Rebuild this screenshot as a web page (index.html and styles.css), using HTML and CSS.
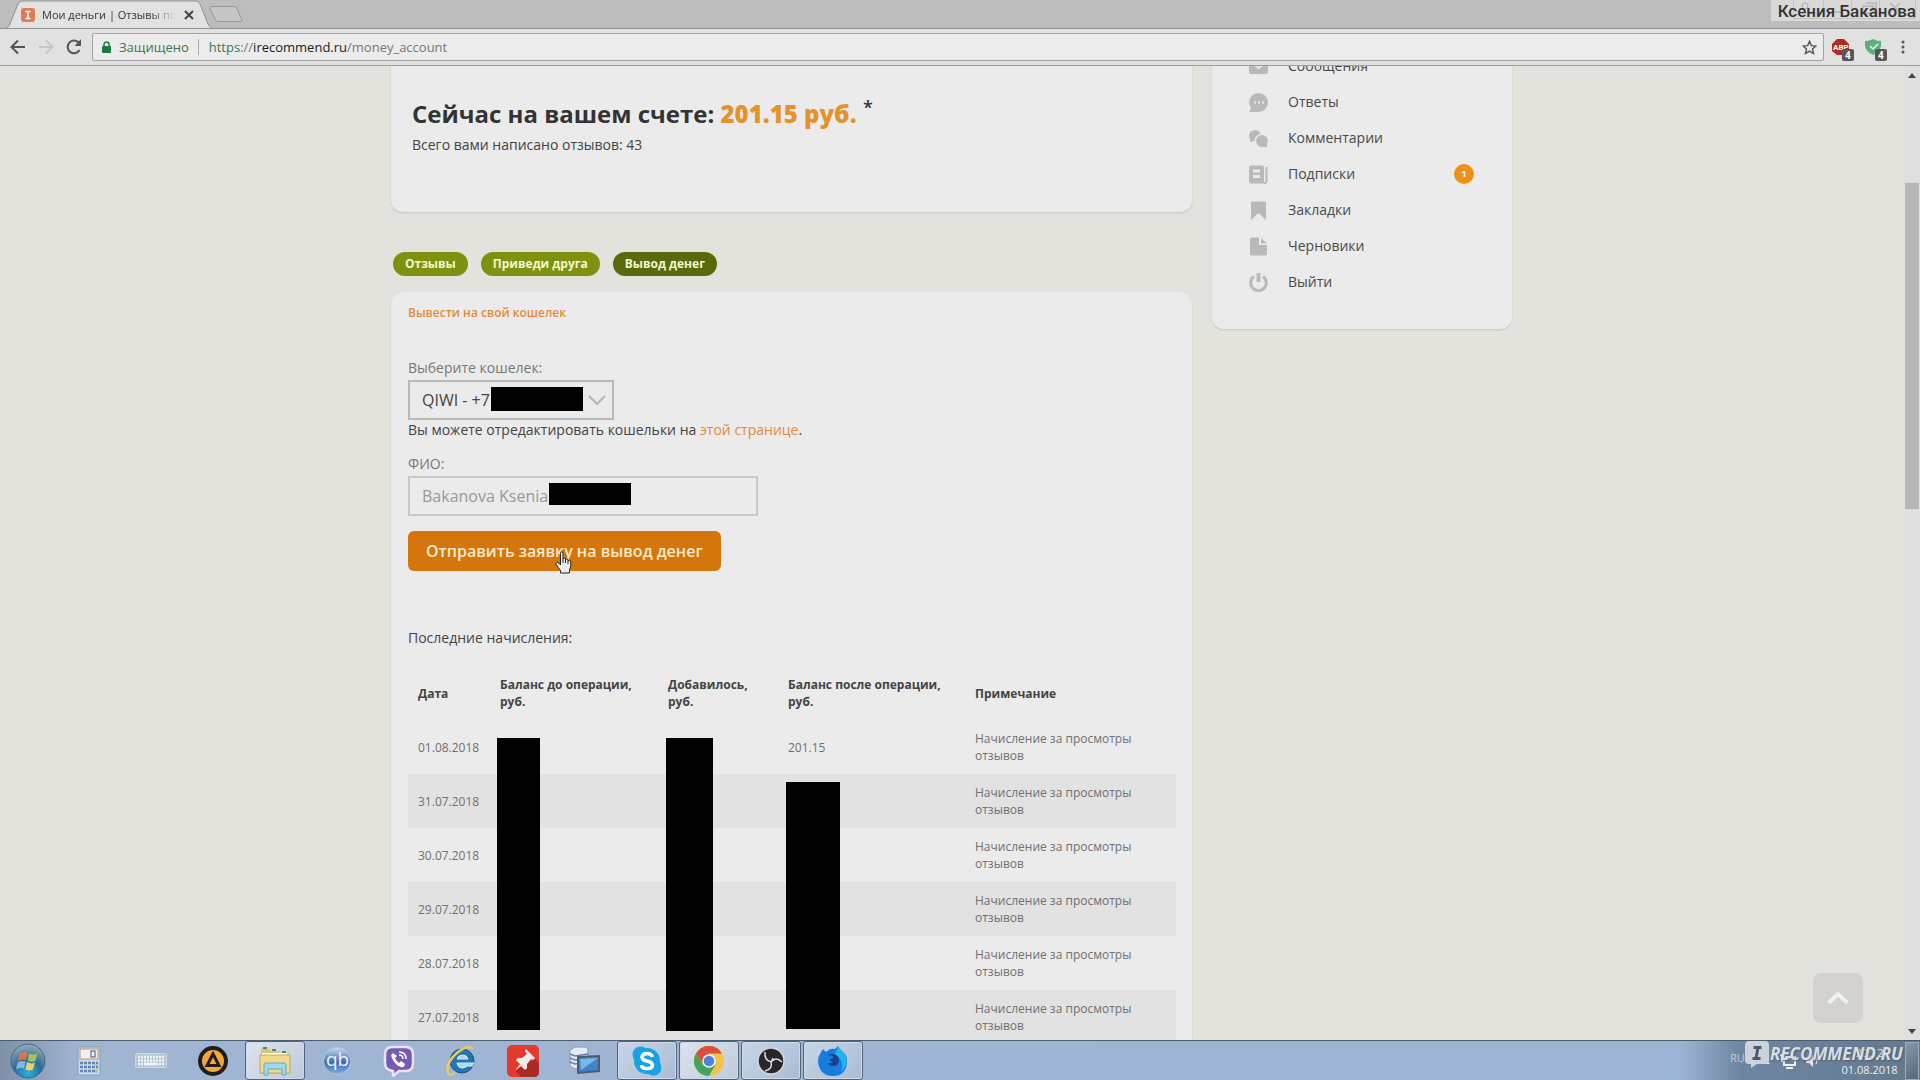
FILE: index.html
```html
<!DOCTYPE html>
<html lang="ru">
<head>
<meta charset="utf-8">
<title>Мои деньги | Отзывы покупателей</title>
<link rel="stylesheet" href="styles.css">
</head>
<body>
<header class="browser">
  <div class="tabstrip">
    <div class="tab">
      <svg class="tab-shape" width="206" height="28" viewBox="0 0 206 28"><path d="M0 28C3 27 3 26 4 24L12 4Q13 1 16 1H190Q193 1 194 4L202 24Q203 27 206 28Z" fill="#e2e2e2"/><path d="M0 28C3 27 3 26 4 24L12 4Q13 1 16 1H190Q193 1 194 4L202 24Q203 27 206 28" fill="none" stroke="#929292"/></svg>
      <svg class="favicon" width="14" height="14" viewBox="0 0 14 14"><rect width="14" height="14" rx="3" fill="#e27a55"/><path d="M4.500 3.500h5M7 3.500v7M4.500 10.500h5" stroke="#fff" stroke-width="1.600"/></svg>
      <span class="tab-title">Мои деньги | Отзывы покупателей</span>
      <button class="icon-btn" aria-label="Закрыть вкладку"><svg width="10" height="10" viewBox="0 0 10 10"><path d="M1 1l8 8M9 1l-8 8" stroke="#444" stroke-width="2"/></svg></button>
    </div>
    <button class="icon-btn new-tab" aria-label="Новая вкладка"><svg width="34" height="16" viewBox="0 0 34 16"><path d="M3 .5H25Q27 .500 28 3L33 14Q33 15.500 31 15.500H9Q7 15.500 6 13L1 3Q.5 .5 3 .5Z" fill="#c6c6c6" stroke="#989898"/></svg></button>
    <div class="window-box">
      <svg class="window-controls" width="149" height="21" viewBox="0 0 149 21"><rect width="149" height="21" fill="#d9d9d9"/><path d="M22.500 0v18M52.500 0v18M80.500 0v18M108.500 0v18M144.500 0v18M22 18.500h122" stroke="#c2c2c2"/><circle cx="34" cy="6" r="3" fill="none" stroke="#aaa"/><path d="M60 12h12M92 6h10v7h-10zM95 3h10v7M119 3l10 9M129 3l-10 9" fill="none" stroke="#b4b4b4" stroke-width="1.500"/></svg>
      <span class="owner">Ксения Баканова</span>
    </div>
  </div>
  <div class="toolbar">
    <button class="icon-btn" aria-label="Назад"><svg width="16" height="16" viewBox="0 0 16 16"><path d="M15 8H2M8 1.500L1.500 8L8 14.500" fill="none" stroke="#555" stroke-width="2"/></svg></button>
    <button class="icon-btn" aria-label="Вперёд"><svg width="16" height="16" viewBox="0 0 16 16"><path d="M1 8h13M8 1.500L14.500 8L8 14.500" fill="none" stroke="#c6c6c6" stroke-width="2"/></svg></button>
    <button class="icon-btn" aria-label="Обновить"><svg width="16" height="16" viewBox="0 0 16 16"><path d="M13.500 11A6.300 6.300 0 1 1 12.500 3.500" fill="none" stroke="#555" stroke-width="2"/><path d="M15 0v7H8.500z" fill="#555"/></svg></button>
    <div class="address">
      <svg width="9" height="12" viewBox="0 0 9 12"><rect y="5" width="9" height="7" rx="1" fill="#1f7a3d"/><path d="M2 5.500V3.500a2.500 2.500 0 0 1 5 0v2" fill="none" stroke="#1f7a3d" stroke-width="1.500"/></svg>
      <span class="secure">Защищено</span>
      <span class="url"><span class="scheme">https</span>://<span class="host">irecommend.ru</span>/money_account</span>
      <svg class="star" width="15" height="15" viewBox="0 0 16 16"><path d="M8 1.500l2 4.500 4.900.4-3.700 3.200 1.100 4.800L8 11.900l-4.300 2.500 1.100-4.800L1.100 6.400 6 6z" fill="none" stroke="#555" stroke-width="1.500"/></svg>
    </div>
    <button class="icon-btn ext" aria-label="ABP"><svg width="24" height="24" viewBox="0 0 24 24"><path d="M5 1h7l5 5v7l-5 4H5l-5-4V6z" fill="#b52a20"/><text x="1" y="12" class="abp">ABP</text><rect x="10" y="11" width="12" height="12" rx="2" fill="#565656"/><text x="13" y="21" class="count">4</text></svg></button>
    <button class="icon-btn ext" aria-label="Защита"><svg width="24" height="24" viewBox="0 0 24 24"><path d="M0 3Q5 3 8 1Q11 3 16 3V8Q15 14 8 17Q1 14 0 8Z" fill="#5faf7c"/><path d="M5 8l3 3 5-5" fill="none" stroke="#e5f2e9" stroke-width="1.500"/><rect x="10" y="11" width="12" height="12" rx="2" fill="#565656"/><text x="13" y="21" class="count">4</text></svg></button>
    <button class="icon-btn menu" aria-label="Меню"><svg width="4" height="14" viewBox="0 0 4 14" fill="#555"><circle cx="2" cy="2" r="1.500"/><circle cx="2" cy="7" r="1.500"/><circle cx="2" cy="12" r="1.500"/></svg></button>
  </div>
</header>

<div class="viewport">
  <div class="page">
    <div class="layout">
      <main class="main">
        <section class="card balance">
          <h1>Сейчас на вашем счете: <span class="sum">201.15 руб.</span> <sup>*</sup></h1>
          <p>Всего вами написано отзывов: 43</p>
        </section>
        <nav class="pills">
          <a href="#reviews">Отзывы</a>
          <a href="#friend">Приведи друга</a>
          <a href="#payout" class="active">Вывод денег</a>
        </nav>
        <section class="card payout">
          <a class="payout-title" href="#wallet">Вывести на свой кошелек</a>
          <form class="form">
            <label for="wallet">Выберите кошелек:</label>
            <div class="select-box">
              <select id="wallet"><option>QIWI - +7</option></select>
              <span class="mask mask-phone"></span>
              <svg class="chevron" width="18" height="11" viewBox="0 0 18 11"><path d="M1 1l8 8 8-8" fill="none" stroke="#b5b5b5" stroke-width="2"/></svg>
            </div>
            <p class="hint">Вы можете отредактировать кошельки на <a href="#wallets">этой странице</a>.</p>
            <label for="fio">ФИО:</label>
            <div class="input-box">
              <input id="fio" type="text" value="Bakanova Ksenia">
              <span class="mask mask-name"></span>
            </div>
            <div class="submit-box">
              <button class="submit" type="button">Отправить заявку на вывод денег</button>
              <svg class="pointer" width="17" height="23" viewBox="0 0 17 23"><path d="M5.500 14V2.500Q5.500 .8 6.700 .8T8 2.500V8Q8 6.800 9.200 6.800T10.500 8V9Q10.500 8 11.700 8T13 9.200V10Q13 9.300 14.300 9.300T15.800 11V15Q15.500 17 14.500 18.500V22H5.500V19.500Q3 16.500 1.200 13.500Q.5 12 1.700 11.500T4 12.300Z" fill="#ececec" stroke="#222"/><path d="M8 8v4M10.500 9v3M13 10v3" stroke="#222"/></svg>
            </div>
          </form>
          <p class="table-title">Последние начисления:</p>
          <div class="table-box">
            <table>
              <colgroup><col class="c-date"><col class="c-before"><col class="c-added"><col class="c-after"><col></colgroup>
              <thead><tr><th>Дата</th><th>Баланс до операции, руб.</th><th>Добавилось, руб.</th><th>Баланс после операции, руб.</th><th>Примечание</th></tr></thead>
              <tbody>
                <tr><td>01.08.2018</td><td></td><td></td><td>201.15</td><td>Начисление за просмотры отзывов</td></tr>
                <tr><td>31.07.2018</td><td></td><td></td><td></td><td>Начисление за просмотры отзывов</td></tr>
                <tr><td>30.07.2018</td><td></td><td></td><td></td><td>Начисление за просмотры отзывов</td></tr>
                <tr><td>29.07.2018</td><td></td><td></td><td></td><td>Начисление за просмотры отзывов</td></tr>
                <tr><td>28.07.2018</td><td></td><td></td><td></td><td>Начисление за просмотры отзывов</td></tr>
                <tr><td>27.07.2018</td><td></td><td></td><td></td><td>Начисление за просмотры отзывов</td></tr>
              </tbody>
            </table>
            <span class="mask mask-before"></span>
            <span class="mask mask-added"></span>
            <span class="mask mask-after"></span>
          </div>
        </section>
      </main>
      <aside class="card side">
        <a href="#messages"><svg width="19" height="19" viewBox="0 0 19 19"><rect y="2" width="19" height="15" rx="2" fill="#b9b9b9"/><path d="M3 6l6.500 5L16 6" fill="none" stroke="#ebebeb" stroke-width="2"/></svg>Сообщения</a>
        <a href="#answers"><svg width="19" height="19" viewBox="0 0 19 19"><path d="M9.500 0a9.500 9.500 0 1 1 0 19c-3 0-7 0-9 0l1.500-4A9.500 9.500 0 0 1 9.500 0z" fill="#b9b9b9"/><path d="M5 9.500h2M9 9.500h2M13 9.500h2" stroke="#ebebeb" stroke-width="2"/></svg>Ответы</a>
        <a href="#comments"><svg width="19" height="19" viewBox="0 0 19 19" fill="#b9b9b9"><path d="M6 1A5.500 5.500 0 0 1 11.500 4.500Q5.500 6.500 5.500 12L1 13V10Q0 8.500 0 6.500A6 5.500 0 0 1 6 1z"/><path d="M13 6a6 6 0 0 1 5 9v3h-5A6 6 0 0 1 13 6z"/></svg>Комментарии</a>
        <a href="#subscriptions"><svg width="19" height="19" viewBox="0 0 19 19"><path d="M2 .5H13Q15 .5 15 2.500V18.500H2Q0 18.500 0 16.500V2.500Q0 .5 2 .5z" fill="#b9b9b9"/><path d="M4 6h7M4 11.500h7" stroke="#ebebeb" stroke-width="3"/><path d="M17.500 2v15q0 1-3 1" fill="none" stroke="#b9b9b9" stroke-width="2"/></svg>Подписки<span class="badge">1</span></a>
        <a href="#bookmarks"><svg width="19" height="19" viewBox="0 0 19 19"><path d="M2 .5H17V19L9.500 12L2 19z" fill="#b9b9b9"/></svg>Закладки</a>
        <a href="#drafts"><svg width="19" height="19" viewBox="0 0 19 19" fill="#b9b9b9"><path d="M3 .5H10V8H18V17q0 1.500-1.500 1.500H2.500Q1 18.500 1 17V2Q1 .5 3 .5z"/><path d="M12 1l6 5.500h-6z"/></svg>Черновики</a>
        <a href="#logout"><svg width="19" height="19" viewBox="0 0 19 19" fill="none" stroke="#b9b9b9" stroke-width="3"><path d="M5 3.500a7.800 7.800 0 1 0 9 0"/><path d="M9.500 0v9" stroke-width="4"/></svg>Выйти</a>
      </aside>
    </div>
    <button class="to-top" aria-label="Наверх"><svg width="22" height="14" viewBox="0 0 22 14"><path d="M1.500 12L11 3l9.500 9" fill="none" stroke="#f1f1f0" stroke-width="4"/></svg></button>
  </div>
  <div class="scrollbar">
    <svg width="8" height="5" viewBox="0 0 8 5"><path d="M0 5l4-5 4 5z" fill="#444"/></svg>
    <div class="track"><div class="thumb"></div></div>
    <svg width="8" height="5" viewBox="0 0 8 5"><path d="M0 0h8L4 5z" fill="#444"/></svg>
  </div>
</div>

<footer class="taskbar">
  <button class="start" aria-label="Пуск"><svg width="36" height="36" viewBox="0 0 36 36"><defs><radialGradient id="orb" cx=".5" cy=".85" r=".8"><stop offset="0" stop-color="#25b5e0"/><stop offset=".5" stop-color="#2b6c9c"/><stop offset="1" stop-color="#8fa5b8"/></radialGradient></defs><circle cx="18" cy="18" r="17" fill="url(#orb)" stroke="#466580"/><path d="M9.500 11q4-3 8-1l-1.500 7q-4-1.500-8 1z" fill="#e0734a"/><path d="M19 10.500q4 2 8.500 0l-2 7.500q-4 2-8-.5z" fill="#a3c35e"/><path d="M7.500 19.500q4-2.500 8-1l-1.500 7q-4-2-8 1z" fill="#7fb9e6"/><path d="M17 19q4 2.500 8 .5l-2 7q-4 2-7.500 0z" fill="#f2cf5b"/></svg></button>
  <div class="apps">
    <button aria-label="Калькулятор"><svg width="24" height="30" viewBox="0 0 24 30"><rect x="1" y="1" width="22" height="28" rx="1" fill="#c8ddf0" stroke="#7e9fc0"/><rect x="3" y="3" width="18" height="10" fill="#eef2f5" stroke="#c58f56"/><rect x="14" y="5" width="4" height="6" fill="none" stroke="#456"/><path d="M3 17h18M3 21h18M3 25h18" stroke="#6483ad" stroke-width="2.500" stroke-dasharray="3 1"/><path d="M18 19h3M18 25h3" stroke="#c4c17a" stroke-width="2"/></svg></button>
    <button aria-label="Экранная клавиатура"><svg width="32" height="16" viewBox="0 0 32 16"><rect x=".5" y=".5" width="31" height="14" rx="1" fill="#b5c4d6" stroke="#cbd8e6"/><path d="M3 4h27M3 7.500h27M3 11h27" stroke="#f2f5f8" stroke-width="2.500" stroke-dasharray="2 1"/><path d="M10 11h11" stroke="#f2f5f8" stroke-width="2.500"/></svg></button>
    <button aria-label="AIMP"><svg width="30" height="30" viewBox="0 0 30 30"><circle cx="15" cy="15" r="13" fill="#f1a83b" stroke="#221c1a" stroke-width="4"/><path d="M15 8L9 19.500h12z" fill="none" stroke="#221c1a" stroke-width="3"/></svg></button>
    <button class="open current" aria-label="Проводник"><svg width="32" height="30" viewBox="0 0 32 30"><path d="M2 3h8l2 2h8l2 2h8v21H2z" fill="#dcc372"/><path d="M3 7h25v3H3z" fill="#fff"/><path d="M1 9h30v18H1z" fill="#efd98d" stroke="#c2a860"/><path d="M4 2h4M13 4h4M23 6h4" stroke="#4f8b62" stroke-width="2"/><path d="M5 29V19q0-2 2-2h18q2 0 2 2v10h-4v-6H9v6z" fill="#9fd7ee" stroke="#5fa9ca"/></svg></button>
    <button aria-label="qBittorrent"><svg width="28" height="28" viewBox="0 0 28 28"><defs><linearGradient id="qb" x2="0" y2="1"><stop offset="0" stop-color="#c9d9ec"/><stop offset=".55" stop-color="#3f6bac"/><stop offset="1" stop-color="#80b0df"/></linearGradient></defs><circle cx="14" cy="14" r="13.500" fill="url(#qb)" stroke="#b6c8dd"/><text x="3" y="19" class="qb">qb</text></svg></button>
    <button aria-label="Viber"><svg width="32" height="32" viewBox="0 0 32 32"><path d="M9 2h14q7 0 7 8v8q0 8-7 8h-7l-6 5v-5Q2 25 2 18v-8Q2 2 9 2z" fill="#765bb5" stroke="#e9e4f3" stroke-width="2.500"/><path d="M10 8q-3 2-1 5 3 7 9 9 3 1 4-3l-4-3-2 2q-3-2-4-5l2-2z" fill="#fff"/><path d="M16 7q7 0 7 7M16 10q4 0 4 4" fill="none" stroke="#fff" stroke-width="1.500"/></svg></button>
    <button aria-label="Internet Explorer"><svg width="32" height="32" viewBox="0 0 32 32"><circle cx="17" cy="16" r="12" fill="#2475b4" stroke="#174e86"/><path d="M29 18H12q1 5 5.500 5 3 0 4.500-2h6M12 14q1-4 5.500-4t5.500 4z" fill="#a9d8f0" stroke="#d5ebf6"/><path d="M28 4Q24-1 13 7 0 18 3 28q1 3 7 0" fill="none" stroke="#e6cb67" stroke-width="2.500"/></svg></button>
    <button aria-label="Канцелярская кнопка"><svg width="32" height="32" viewBox="0 0 32 32"><rect width="32" height="32" rx="5" fill="#e23b2e"/><path d="M28 14L32 18V27q0 5-5 5H14L8 25z" fill="#a82c25"/><path d="M19 4l9 9-2 2-2-1-4 5v4l-2 2-4-4-6 5 5-7-4-4 2-2h4l5-4-2-3z" fill="#f3ede9"/></svg></button>
    <button aria-label="Удалённый рабочий стол"><svg width="32" height="30" viewBox="0 0 32 30"><path d="M1 4l5-3h11l2 2v17L6 23l-5-3z" fill="#e3eaf2" stroke="#8498b5"/><path d="M1 8l5 2 13-2M1 12l5 2 13-2M1 16l5 2 13-2" fill="none" stroke="#6480ae" stroke-width="1.500"/><path d="M9 11l21-1v15L9 27z" fill="#3e86cb" stroke="#505c6c" stroke-width="2"/><path d="M11 13l18-1-17 12z" fill="#79b8ea"/></svg></button>
    <button class="open" aria-label="Skype"><svg width="30" height="30" viewBox="0 0 30 30"><circle cx="15" cy="15" r="13" fill="#17a3e0"/><circle cx="8.500" cy="8.500" r="8" fill="#17a3e0"/><circle cx="21.500" cy="21.500" r="8" fill="#17a3e0"/><path d="M20.500 11q-1-3.500-5.500-3.500t-5 3.500q0 3 5 4t5.500 4q0 3.500-5.500 3.500T9.500 19" fill="none" stroke="#fff" stroke-width="3.500"/></svg></button>
    <button class="open current" aria-label="Chrome"><svg width="30" height="30" viewBox="0 0 30 30"><circle cx="15" cy="15" r="15" fill="#f3c443"/><path d="M2 7.500A15 15 0 0 1 28 7.500H15l-6.500 11z" fill="#dc4d3c"/><path d="M2 7.500A15 15 0 0 0 15 30l6.500-11.500H8.500z" fill="#46a35e"/><circle cx="15" cy="15" r="6.800" fill="#f5f5f5"/><circle cx="15" cy="15" r="5.300" fill="#4786d8"/></svg></button>
    <button class="open" aria-label="OBS"><svg width="28" height="28" viewBox="0 0 28 28"><circle cx="14" cy="14" r="13" fill="#282629" stroke="#d2d5da" stroke-width="1.500"/><path d="M14 15Q7 13 8 5M14 15q5-6 11 0M14 15q2 7-6 9M14 15l2-4" fill="none" stroke="#ddd" stroke-width="1.500"/></svg></button>
    <button class="open" aria-label="Firefox"><svg width="30" height="30" viewBox="0 0 30 30"><path d="M2 8l3-5 3 3q4-4 9-3l3-3 2 4q8 4 7 12-1 14-14 14T0 16q0-5 2-8z" fill="#167dde"/><path d="M20 1q11 8 8 18-2 5-5 7 4-11-6-18z" fill="#22b4ee"/><path d="M10 9q3-2 8 0 3 2 3 6-1 5-6 5-4 0-5-3 3 1 5-1-3 0-3-3l4-1q-1-3-6-3z" fill="#1b3f86"/></svg></button>
  </div>
  <div class="tray">
    <span class="lang">RU</span>
    <svg class="tray-icons" width="60" height="18" viewBox="0 0 60 18"><path d="M0 12l5-5 5 5z" fill="#eee"/><path d="M24 5h11v8H24zM26 16h7M22 2v8M20 3h5" fill="none" stroke="#eee" stroke-width="2"/><path d="M46 6h3l4-4v13l-4-4h-3z" fill="#e5e5e5"/><path d="M56 5q2 4 0 7" fill="none" stroke="#eee"/></svg>
    <span class="clock"><span>20:12</span><span>01.08.2018</span></span>
    <button class="show-desktop" aria-label="Свернуть все окна"></button>
    <div class="watermark">
      <svg width="26" height="30" viewBox="0 0 26 30"><path d="M5 2h16q4 0 4 4v15q0 4-4 4h-8l-6 4v-4H5q-4 0-4-4V6q0-4 4-4z" fill="#ccd3db"/><path d="M9.500 8.500h8M8.500 19.500h8M14 8.500l-2 11" stroke="#4e5c6c" stroke-width="3"/></svg>
      <span>RECOMMEND.RU</span>
    </div>
  </div>
</footer>
</body>
</html>
```

FILE: styles.css
```css
* { box-sizing: border-box; }

body {
  margin: 0;
  height: 100vh;
  display: flex;
  flex-direction: column;
  overflow: hidden;
  background: #e3e2dd;
  color: #444;
  font: 14px/20px "Open Sans", "Noto Sans", sans-serif;
}

h1, p { margin: 0; }
svg { display: block; flex: none; }
a { color: #e08c3c; text-decoration: none; }
button { font-family: inherit; }

/* Browser frame */
.tabstrip {
  display: flex;
  height: 28px;
  padding-left: 6px;
  background: #bdbdbd;
}
.tab {
  position: relative;
  display: flex;
  align-items: center;
  width: 206px;
  padding: 2px 18px 0 15px;
}
.tab-shape { position: absolute; left: 0; top: 0; }
.favicon { position: relative; }
.tab-title {
  position: relative;
  flex: 1;
  margin: 0 8px 0 7px;
  overflow: hidden;
  white-space: nowrap;
  font-size: 11px;
  color: #333;
  -webkit-mask-image: linear-gradient(to right, #000 80%, transparent);
  mask-image: linear-gradient(to right, #000 80%, transparent);
}
.icon-btn {
  position: relative;
  display: flex;
  padding: 0;
  border: 0;
  background: none;
}
.new-tab { align-self: center; margin-left: -3px; }
.window-box { position: relative; height: 21px; margin-left: auto; }
.owner {
  position: absolute;
  top: 0;
  right: 4px;
  font: 500 17px/22px Roboto, sans-serif;
  white-space: nowrap;
  color: #333;
}
.toolbar {
  display: flex;
  align-items: center;
  gap: 12px;
  height: 38px;
  padding: 0 15px 0 10px;
  background: #e1e1e1;
  border-top: 1px solid #929292;
  border-bottom: 1px solid #9d9d9d;
}
.address {
  flex: 1;
  display: flex;
  align-items: center;
  height: 28px;
  margin: 0 -4px 0 -2px;
  padding: 0 6px 0 9px;
  border: 1px solid #a2a2a2;
  border-radius: 2px;
  background: #ececec;
  font-size: 13px;
}
.secure {
  margin: 0 10px 0 8px;
  padding-right: 9px;
  border-right: 1px solid #aaa;
  line-height: 16px;
  color: #357a4b;
}
.url { flex: 1; color: #777; }
.scheme { color: #357a4b; }
.host { color: #222; }
.ext { margin-right: -3px; padding-top: 6px; }
.menu { margin-left: 3px; }
.abp { font: 700 8px Roboto, sans-serif; fill: #fff; }
.count { font: 700 10px Roboto, sans-serif; fill: #fff; }

/* Page */
.viewport { flex: 1; display: flex; min-height: 0; }
.page { position: relative; flex: 1; padding: 0 20px 0 19px; overflow: hidden; }
.layout {
  display: grid;
  grid-template-columns: 1fr 300px;
  gap: 20px;
  align-items: start;
  max-width: 1121px;
  margin: -24px auto 0;
}
.card {
  background: #ebebeb;
  border-radius: 12px;
  box-shadow: 0 1px 2px #c6c5c1;
}
.balance { padding: 56px 21px 57px; }
.balance h1 {
  margin-bottom: 5px;
  font-size: 24px;
  line-height: 32px;
  font-weight: 700;
  color: #333;
}
.balance sup { font-size: 18px; line-height: 0; font-weight: 600; }
.balance .sum { color: #e4932b; font-weight: 800; }

.pills { display: flex; gap: 13px; padding: 40px 2px 16px; }
.pills a {
  padding: 0 12px;
  border-radius: 12px;
  background: #7f920f;
  color: #f3f6cf;
  font-size: 12px;
  line-height: 24px;
  font-weight: 700;
}
.pills .active { background: #586a0c; }

.payout { padding: 12px 16px 20px 17px; }
.payout-title { display: block; font-size: 12px; line-height: 18px; font-weight: 600; }
.form { display: flex; flex-direction: column; align-items: flex-start; padding-top: 36px; }
.form label { color: #777; }
.select-box, .input-box, .submit-box { position: relative; }
.select-box, .input-box { margin-top: 2px; }
.form select, .form input {
  display: block;
  height: 40px;
  padding: 0 12px;
  appearance: none;
  border: 2px solid #b9b9b9;
  border-radius: 0;
  background: #ebebeb;
  color: #444;
  font: 16px/20px "Open Sans", sans-serif;
}
.form select { width: 206px; }
.form input { width: 350px; border-color: #c9c9c9; color: #999; }
.chevron { position: absolute; right: 8px; top: 15px; }
.hint { margin-bottom: 14px; }
.submit {
  display: block;
  height: 40px;
  margin-top: 15px;
  padding: 0 18px;
  border: 0;
  border-radius: 6px;
  background: #d4760c;
  color: #fbe9cc;
  font-size: 16px;
  font-weight: 600;
}
.pointer { position: absolute; left: 147px; top: 35px; }
.mask { position: absolute; background: #000; }
.mask-phone { left: 83px; top: 7px; width: 92px; height: 24px; }
.mask-name { left: 141px; top: 7px; width: 82px; height: 22px; }
.mask-before { left: 89px; top: 72px; width: 43px; height: 292px; }
.mask-added { left: 258px; top: 72px; width: 47px; height: 293px; }
.mask-after { left: 378px; top: 116px; width: 54px; height: 247px; }

.table-title { padding: 57px 0 18px; }
.table-box { position: relative; }
table { width: 100%; table-layout: fixed; border-collapse: collapse; font-size: 12px; line-height: 17px; }
.c-date { width: 82px; }
.c-before { width: 168px; }
.c-added { width: 120px; }
.c-after { width: 187px; }
th, td { height: 54px; padding: 0 8px 0 10px; text-align: left; }
th { color: #444; font-weight: 700; }
td { color: #707070; }
td:last-child { padding-right: 40px; }
tbody tr:nth-child(even) { background: #e2e2e2; }

.side { padding: 6px 38px 29px 37px; }
.side a { display: flex; align-items: center; gap: 20px; height: 36px; color: #4a4a4a; }
.badge {
  width: 20px;
  margin-left: auto;
  border-radius: 50%;
  background: #ed9116;
  color: #fff;
  font-size: 9px;
  font-weight: 700;
  text-align: center;
}
.to-top {
  position: absolute;
  right: 41px;
  bottom: 17px;
  display: grid;
  place-items: center;
  width: 50px;
  height: 50px;
  padding: 0;
  border: 0;
  border-radius: 8px;
  background: #d3d2cf;
}

.scrollbar {
  display: flex;
  flex-direction: column;
  align-items: center;
  width: 16px;
  padding: 7px 1px 6px;
  background: #dfdfe0;
}
.track { flex: 1; width: 100%; padding-top: 105px; }
.thumb { height: 326px; background: #b6b6b7; }

/* Taskbar */
.taskbar {
  display: flex;
  height: 40px;
  border-top: 1px solid #4c5d70;
  background: linear-gradient(to right, #7f90a8, #a0b5d2 80px, #9cb4d3 1680px, #6f86a2 1740px, #64788f);
}
.start {
  display: grid;
  place-items: center;
  width: 55px;
  margin-right: 4px;
  padding: 0;
  border: 0;
  background: none;
}
.apps { display: flex; flex: 1; gap: 2px; }
.apps button {
  display: grid;
  place-items: center;
  width: 60px;
  padding: 0;
  border: 1px solid transparent;
  border-radius: 3px;
  background: none;
}
.apps .open {
  border-color: #53647b;
  background: linear-gradient(135deg, #c8d5e6, #a9bcd6);
  box-shadow: inset 0 0 0 1px #cfdae8;
}
.apps .current { background: linear-gradient(135deg, #dde4ec, #bdcbdc); }
.qb { font: 19px "Open Sans", sans-serif; fill: #eef3f9; }
.tray { position: relative; display: flex; align-items: center; width: 190px; color: #eee; font-size: 11px; }
.lang { width: 30px; padding-bottom: 6px; color: #c4ccd6; }
.clock { display: flex; flex-direction: column; align-items: center; width: 61px; margin-left: 19px; line-height: 17px; }
.clock span { white-space: nowrap; }
.show-desktop {
  width: 14px;
  height: 38px;
  margin-left: 5px;
  padding: 0;
  border: 1px solid #9aa9ba;
  background: linear-gradient(135deg, #8998a8, #56677b);
}
.watermark { position: absolute; left: 14px; top: -2px; display: flex; align-items: center; white-space: nowrap; }
.watermark span { color: #d9dee4; font: italic 700 17px/30px "Open Sans", sans-serif; text-shadow: 1px 1px 2px #4d5a69; }
```
